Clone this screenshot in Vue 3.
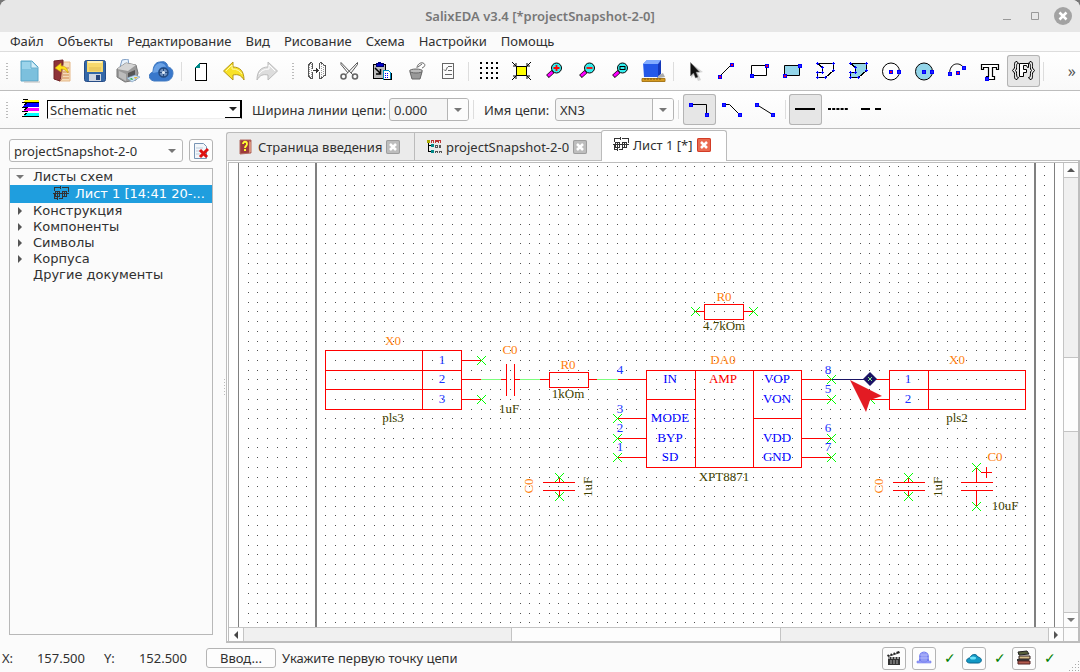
<script setup>
import { ref } from 'vue'

const menu = ['Файл', 'Объекты', 'Редактирование', 'Вид', 'Рисование', 'Схема', 'Настройки', 'Помощь']

const node = (x, y, c = '#22f') => `<rect x="${x - 1.5}" y="${y - 1.5}" width="4" height="4" fill="#00f"/><rect x="${x - 0.5}" y="${y - 0.5}" width="2" height="2" fill="${c}"/>`
const lens = (mark) => `<path d="M5.500 17.500L11 12.500" stroke="#000" stroke-width="4"/><path d="M6 17L10.500 13" stroke="#f0f" stroke-width="3"/><circle cx="14.500" cy="9" r="5" fill="#3ee" stroke="#000"/>${mark}`
const poly = (fill) => `<g shape-rendering="crispEdges"><path d="M4.500 4.500H20.500V11.500L12.500 18.500H4.500V13.500H9.500V8.500Z" fill="${fill}" stroke="#000"/><path d="M3 4.500h3M4.500 3v3M19 4.500h3M20.500 3v3M19 11.500h3M20.500 10v3M11 18.500h3M12.500 17v3M3 18.500h3M4.500 17v3M3 13.500h3M4.500 12v3M8 13.500h3M9.500 12v3M8 8.500h3M9.500 7v3" stroke="#00f"/></g>`

const icons = {
  doc: '<path d="M4 2h11l6 6v14H4Z" fill="#7cc0dd" stroke="#5aa6c8"/><path d="M5 3h9v7H5Z" fill="#9bd3ea"/><path d="M14 2v7h7" fill="#d5eef8" stroke="#6cb1cf"/><path d="M7 23h16" stroke="#bbb"/>',
  open: '<path d="M9 3h11v19H9Z" fill="#f5dcb8" stroke="#e5b888"/><path d="M13 9h6M13 13h6M13 16h6M13 19h6" stroke="#d08850"/><path d="M4 2l9-1v4l-3 17-6-2Z" fill="#8e3338" stroke="#6e2327"/><path d="M10 21l2-1V6" stroke="#c47a5a" fill="none"/><path d="M5 9l6-5v3c5 0 7 3 7 7-2-3-4-4-7-4v3Z" fill="#ffe21a" stroke="#c59a10" stroke-width=".6"/>',
  save: '<rect x="1.500" y="1.500" width="21" height="21" rx="2" fill="#3468a8" stroke="#264c86"/><path d="M4 2h16v11H4Z" fill="#f7d96c"/><path d="M5 2h14v2H5Z" fill="#fff3b8"/><path d="M6 9h12M6 11h12" stroke="#e0bc55"/><path d="M6 15h12v7H6Z" fill="#cfd6e2"/><path d="M13 16h4v5h-4Z" fill="#27457c"/>',
  print: '<path d="M4 8l2-7 6-1 1 6Z" fill="#e8f2fc" stroke="#7d9cc4"/><path d="M1 10l9-6 10 2 2 8-2 7-11 2-8-5Z" fill="#999" stroke="#777"/><path d="M1 10l9-6 10 2-8 6Z" fill="#d5d5d5"/><path d="M3 12l7 3v7l-7-4Z" fill="#bcbcbc"/><path d="M12 14l7-3v6l-7 3Z" fill="#555"/><path d="M11 19l8-3 5 2-8 5Z" fill="#cde4f4" stroke="#7799c0" stroke-width=".6"/><path d="M13 20l3-1 1 2" fill="#2cab36"/><path d="M18 18l4 0-3 2Z" fill="#e8b838"/>',
  cloud: '<path d="M5 22c-6-1-6-8-1-9 0-5 2-10 7-10 4-1 7 0 8 5 5 1 6 6 4 10-2 4-5 4-8 4Z" fill="#3978cb" stroke="#3f78c0"/><path d="M4 14c1-7 3-9 7-10 3 0 5 1 6 4-5-1-7 1-8 5Z" fill="#6ba2e5"/><circle cx="14.500" cy="13.500" r="4.500" fill="#6f91bf" stroke="#234a80" stroke-width="1.500"/><path d="M14.500 9v9M10 13.500h9" stroke="#234a80"/><circle cx="14.500" cy="13.500" r="1.500" fill="#e3effa"/>',
  blank: '<g shape-rendering="crispEdges"><path d="M6.500 8.500L10.500 4.500H17.500V21.500H6.500Z" fill="#fff" stroke="#000"/><path d="M7 8l3-3v3Z" fill="#088" stroke="#088"/></g>',
  undo: '<path d="M1.500 12L11 3v5c7 0 11 4 11 13-3-5-6-6-11-5v5Z" fill="#f8e227" stroke="#b59618"/><path d="M4 12l6-6v4c5 0 8 2 10 5" stroke="#fff9a5" fill="none"/>',
  redo: '<path d="M22.500 12L13 3v5C6 8 2 12 2 21c3-5 6-6 11-5v5Z" fill="#ddd" stroke="#bbb"/><path d="M20 12l-6-6v4c-5 0-8 2-10 5" stroke="#fff" fill="none"/>',
  mirror: '<g shape-rendering="crispEdges" fill="none" stroke="#555"><path d="M8.500 4v6M8.500 13v7M8 3.500h-1l-3 3v10l3 3h1M15.500 4v6M15.500 13v7M16 3.500h1l4 3v10l-4 3h-1"/><path d="M5.500 6v12M7.500 5v14M17.500 5v14M19.500 6v12" stroke="#999" stroke-dasharray="1 1"/><path d="M9 11.500h6M12.500 9v5M13.500 10v3" stroke="#333"/></g>',
  cut: '<path d="M4 3.500L16 16M20.500 3.500L8.500 16M4 3.500v2L11 14M20.500 3.500v2L14 14" fill="none" stroke="#555"/><circle cx="6.500" cy="17.500" r="2.500" fill="none" stroke="#666" stroke-width="1.600"/><circle cx="18" cy="17.500" r="2.500" fill="none" stroke="#666" stroke-width="1.600"/>',
  paste: '<g shape-rendering="crispEdges"><rect x="3.500" y="5.500" width="12" height="14" fill="#bbb" stroke="#000"/><path d="M6 4h7v3H6Z" fill="#00c" stroke="#006"/><path d="M8 3h3v2H8Z" fill="#008"/></g><path d="M5 9l5 5M10.500 10v5H6" stroke="#000" stroke-width="1.500" fill="none"/><g shape-rendering="crispEdges"><path d="M13.500 11.500h5l2 2v7h-7Z" fill="#fff" stroke="#08b"/><path d="M15 14.500h4M15 16.500h4M15 18.500h4" stroke="#00f" stroke-dasharray="1 1"/><path d="M13.500 20.500h8v-7" stroke="#000" fill="none"/></g>',
  pot: '<g fill="#999" stroke="#666"><path d="M7 13h12l-2 7h-8Z"/><ellipse cx="13" cy="12" rx="6.500" ry="2" fill="#bbb"/><path d="M14 9c0-3 3-6 6-5s2 4-1 5" fill="#fff"/><path d="M15 8l4-3" /></g>',
  list: '<g shape-rendering="crispEdges" fill="none" stroke="#666"><path d="M6.500 4.500h11v15h-11Z"/><path d="M12 7.500h4M12 11.500h4M9 15.500h7"/></g><path d="M8 10.500l1.500 1.500 2-4" fill="none" stroke="#666"/>',
  dots: '<path d="M4 5h2M10 5h2M15 5h2M20 5h2M4 10h2M10 10h2M15 10h2M20 10h2M4 15h2M10 15h2M15 15h2M20 15h2M4 20h2M10 20h2M15 20h2M20 20h2" stroke="#000" stroke-width="2" shape-rendering="crispEdges" transform="translate(0 -1)"/>',
  fit: '<g shape-rendering="crispEdges"><path d="M7.500 7.500h10v9h-10Z" fill="#ff0" stroke="#000"/></g><path d="M3 3l4 4M7 4v3H4M22 3l-4 4M18 4v3h3M3 21l4-4M7 20v-3H4M22 21l-4-4M18 20v-3h3" stroke="#000" fill="none"/>',
  zoomin: lens('<path d="M14.500 6v6M11.500 9h6" stroke="#f00" stroke-width="1.800"/>'),
  zoomout: lens('<path d="M11.500 9h6" stroke="#f00" stroke-width="1.800"/>'),
  zoomfit: lens('<rect x="12" y="7.500" width="5" height="3" fill="#3ee" stroke="#000"/>'),
  cube: '<path d="M2 5l4-4h14l-3 4v13H3Z" fill="#3a6bf0"/><path d="M2 5l4-4h14l-3 4Z" fill="#82acff"/><path d="M17 5l3-4v14l-4 4Z" fill="#1437b8"/><path d="M3 5h14v13H3Z" fill="#2458e8"/><path d="M17 17l5-3 2 4-7 1Z" fill="#aaa"/><path d="M1 19.500h23v3H1Z" fill="#d59a20" stroke="#a8791c"/><path d="M4 19v2M7 19v2M10 19v2M13 19v2M16 19v2M19 19v2" stroke="#7a5713"/>',
  pointer: '<path d="M10 4v15l4-4 3 7 3-1-3-7 5-1Z" fill="#bbb" opacity=".6"/><path d="M9.500 3.500V17l3-3 2 5 2.500-1-2-5h3.500Z" fill="#111" stroke="#777" stroke-width=".5"/>',
  line: '<path d="M5.500 17.500L17.500 5.500" stroke="#000"/>' + node(5.5, 17.5, '#d04') + node(17.5, 5.5, '#d04'),
  rect: '<path d="M4.500 6.500h15v10h-15Z" fill="#fff" stroke="#000"/>' + node(4.5, 16.5) + node(19.5, 6.5, '#d04'),
  rectfill: '<path d="M4.500 6.500h15v10h-15Z" fill="#93d5e9" stroke="#000"/>' + node(4.5, 16.5, '#d04') + node(19.5, 6.5),
  poly: poly('none'),
  polyfill: poly('#93d5e9'),
  circle: '<circle cx="12" cy="12.500" r="8.500" fill="#fff" stroke="#000"/>' + node(11.5, 12.5, '#d04') + node(19.5, 12.5),
  circlefill: '<circle cx="12" cy="12.500" r="8.500" fill="#93d5e9" stroke="#000"/>' + node(11.5, 12.5) + node(19.5, 12.5),
  arc: '<path d="M4.500 14.500C5 3 15 3 18.500 8.500" fill="none" stroke="#000"/>' + node(4.5, 14.5) + node(12.5, 13.5, '#d04') + node(18.5, 8.5),
  text: '<path d="M3.500 5.500h17v5h-2v-2h-4v9h2v3H8.500v-3h2v-9h-5v2h-2Z" fill="#fff" stroke="#000" stroke-width="1.200"/>' + node(8.5, 19.5),
  frame: '<g fill="none" stroke="#000"><path d="M6 2.500C3 2.500 3.500 5 3.500 9L1.500 11.500L3.500 14C3.500 18 3 20.500 6 20.500M7.500 4.500H6.500C5.500 5 5.500 6 5.500 10L4.500 11.500L5.500 13C5.500 18 6 18.500 7.500 18.500M6 2.500l1.500 2M6 20.500l1.500-2"/><path d="M19 2.500C22 2.500 21.500 5 21.500 9L23.500 11.500L21.500 14C21.500 18 22 20.500 19 20.500M17.500 4.500H18.500C19.500 5 19.500 6 19.500 10L20.500 11.500L19.500 13C19.500 18 19 18.500 17.500 18.500M19 2.500l-1.500 2M19 20.500l-1.500-2"/><path d="M8.500 4.500h9v4h-1l-1-2h-3v4h3v3h-3v4h-4Z" fill="#fff"/></g>',
  ortho: '<path d="M3.500 6.500H19.500V16.500" fill="none" stroke="#000"/>' + node(3.5, 6.5) + node(19.5, 16.5),
  bend: '<path d="M3.500 6.500H9.500L19.500 16.500" fill="none" stroke="#000"/>' + node(3.5, 6.5) + node(19.5, 16.5),
  straight: '<path d="M3.500 6.500L19.500 16.500" fill="none" stroke="#000"/>' + node(3.5, 6.5) + node(19.5, 16.5),
  solid: '<path d="M2 11h20" stroke="#000" stroke-width="2"/>',
  dotted: '<path d="M2 11h20" stroke="#000" stroke-width="2" stroke-dasharray="3 1.200"/>',
  dashed: '<path d="M2 11h9M16 11h6" stroke="#000" stroke-width="2"/>'
}

const fileTools = [['doc', 'open', 'save', 'print', 'cloud'], ['blank', 'undo', 'redo']]
const editTools = [
  ['mirror', 'cut', 'paste', 'pot', 'list'],
  ['dots', 'fit', 'zoomin', 'zoomout', 'zoomfit', 'cube'],
  ['pointer', 'line', 'rect', 'rectfill', 'poly', 'polyfill', 'circle', 'circlefill', 'arc', 'text', 'frame']
]
const drawMode = ref('frame')
const bendMode = ref('ortho')
const lineMode = ref('solid')
const width = ref('0.000')
const netName = ref('XN3')

const treeItems = ['Конструкция', 'Компоненты', 'Символы', 'Корпуса']

const tabs = [
  { title: 'Страница введения', icon: 'help', kind: 'intro' },
  { title: 'projectSnapshot-2-0', icon: 'tree', kind: 'overview' },
  { title: 'Лист 1 [*]', icon: 'sheet', kind: 'sheet' }
]
const activeTab = ref(2)

const smallIcons = {
  help: '<path d="M2 1l11 0v13l-11 1Z" fill="#9c3b3c" stroke="#b06a60"/><path d="M11 2v12l2-1V3Z" fill="#d99079"/><path d="M5 5c0-3 4-3 4 0 0 2-2 2-2 4" fill="none" stroke="#ff3" stroke-width="1.800"/><path d="M6 10h2v2H6Z" fill="#ff3"/>',
  tree: '<g shape-rendering="crispEdges"><path d="M2.500 2v11M3 6.500h3M3 12.500h3" stroke="#000" fill="none"/><path d="M1 1h3v3H1Z" fill="#aa0"/><path d="M5 5h3v3H5ZM5 11h3v3H5Z" fill="#088"/><path d="M5.500 4V1.500h2V4M9.500 4V1.500h2v1h-2M12.500 4V1.500h2V4" stroke="#b33" fill="none"/><path d="M9.500 6.500h2v2h-2Z M13 6l2 3M15 6l-2 3M9.500 14v-2h2v2M13.500 14v-2h2v2" stroke="#555" fill="none"/></g>',
  sheet: '<g shape-rendering="crispEdges" fill="none" stroke="#333"><path d="M1.500 5V1.500h6M9 1.500h6V6M7.500 0v3M0 7.500h16M2.500 5.500h4v5h-4ZM9.500 5.500h4v5h-4ZM1.500 8v4.500h3M6 12.500h3V8M4.500 11v3M4.500 6v4M11.500 6v4"/></g>'
}

const stops = (start, count) => Array.from({ length: count }, (_, i) => Math.floor(start + i * 9.715))
const gridPath = stops(166.2, 48).map((y) => stops(248, 83).map((x) => `M${x} ${y}.5h1`).join('')).join('')

const red = [
  'M325.5 350.5H461.5V409.5H325.5ZM422.5 350V409M325 370.5H461M325 389.5H461M461 360.5H481M461 379.5H481M461 399.5H481',
  'M501 379.5H506M506.5 364V396M514.5 364V396M514 379.5H520',
  'M549.5 372.5H588.5V387.5H549.5ZM540 379.5H549M589 379.5H597',
  'M543 482.5H575M543 490.5H575M559.5 478V482M559.5 491V496',
  'M704.5 304.5H743.5V319.5H704.5ZM695 311.5H704M744 311.5H754',
  'M646.5 370.5H801.5V467.5H646.5ZM695.5 370V467M753.5 370V467M646 399.5H695M753 418.5H801',
  'M618 379.5H646M618 418.5H646M618 438.5H646M618 457.5H646M802 379.5H832M802 399.5H832M802 438.5H832M802 457.5H832',
  'M889.5 370.5H1025.5V409.5H889.5ZM928.5 370V409M889 389.5H1025M870 379.5H889M870 399.5H889',
  'M893 482.5H925M893 490.5H925M908.5 478V482M908.5 491V496',
  'M961 482.5H993M961 490.5H993M976.5 467V482M976.5 491V506M981 472.5H992M986.5 467V478'
].join('')

const ends = [
  [481.5, 360.5], [481.5, 399.5], [559.5, 477.5], [559.5, 496.5], [695.5, 311.5], [753.5, 311.5],
  [617.5, 418.5], [617.5, 438.5], [617.5, 457.5], [831.5, 379.5], [831.5, 399.5], [831.5, 438.5],
  [831.5, 457.5], [870.5, 399.5], [908.5, 477.5], [908.5, 496.5], [976.5, 467.5], [976.5, 506.5]
]
const crosses = ends.map(([x, y]) => `M${x - 4.5} ${y - 4.5}l9 9m0 -9l-9 9`).join('')

const labels = [
  [393, 345, 'X0', 'ref'], [393, 422, 'pls3', 'val'], [442, 364, '1', 'pin'], [442, 383, '2', 'pin'], [442, 403, '3', 'pin'],
  [510, 354, 'C0', 'ref'], [509, 413, '1uF', 'val'], [568, 369, 'R0', 'ref'], [568, 398, '1kOm', 'val'],
  [724, 301, 'R0', 'ref'], [724, 330, '4.7kOm', 'val'], [723, 364, 'DA0', 'ref'], [723, 383, 'AMP', 'part'],
  [670, 383, 'IN', 'name'], [670, 422, 'MODE', 'name'], [670, 442, 'BYP', 'name'], [670, 461, 'SD', 'name'],
  [777, 383, 'VOP', 'name'], [777, 403, 'VON', 'name'], [777, 442, 'VDD', 'name'], [777, 461, 'GND', 'name'],
  [724, 481, 'XPT8871', 'val'], [620, 374, '4', 'pin'], [620, 413, '3', 'pin'], [620, 432, '2', 'pin'], [620, 451, '1', 'pin'],
  [828, 374, '8', 'pin'], [828, 393, '5', 'pin'], [828, 432, '6', 'pin'], [828, 451, '7', 'pin'],
  [957, 364, 'X0', 'ref'], [908, 383, '1', 'pin'], [908, 403, '2', 'pin'], [957, 422, 'pls2', 'val'],
  [995, 461, 'C0', 'ref'], [1005, 510, '10uF', 'val']
]
const turned = [[533, 486, 'C0', 'ref'], [592, 487, '1uF', 'val'], [883, 486, 'C0', 'ref'], [942, 487, '1uF', 'val']]
</script>

<template>
  <div class="window">
    <header class="titlebar">
      <h1>SalixEDA v3.4 [*projectSnapshot-2-0]</h1>
      <div class="controls">
        <button aria-label="Свернуть"><svg width="10" height="12"><path d="M1 9.500h8" stroke="#999" /></svg></button>
        <button aria-label="Развернуть"><svg width="10" height="10"><path d="M1.500 1.500h7v7h-7Z" fill="none" stroke="#999" /></svg></button>
        <button aria-label="Закрыть"><svg width="18" height="18"><circle cx="9" cy="9" r="9" fill="#a3a3a3" /><path d="M5.500 5.500l7 7m0-7l-7 7" stroke="#fff" stroke-width="2.500" /></svg></button>
      </div>
    </header>

    <nav class="menubar">
      <button v-for="m in menu" :key="m">{{ m }}</button>
    </nav>

    <div class="toolbar main-tools" role="toolbar">
      <i class="grip first"></i>
      <template v-for="(g, gi) in fileTools" :key="'f' + gi">
        <i v-if="gi" class="sep"></i>
        <button v-for="n in g" :key="n" class="tool" :aria-label="n"><svg width="25" height="24" v-html="icons[n]"></svg></button>
      </template>
      <i class="grip"></i>
      <template v-for="(g, gi) in editTools" :key="'e' + gi">
        <i v-if="gi" class="sep"></i>
        <button v-for="n in g" :key="n" class="tool" :class="{ on: drawMode === n }" :aria-label="n" @click="drawMode = n"><svg width="25" height="24" v-html="icons[n]"></svg></button>
      </template>
      <i class="sep"></i>
      <button class="more" aria-label="Ещё">»</button>
    </div>

    <div class="toolbar net-tools" role="toolbar">
      <i class="grip first"></i>
      <svg class="layers" width="18" height="18" shape-rendering="crispEdges">
        <path d="M3 1h14v2H1Z" fill="#ff0" /><path d="M4 4h13v4H1Z" fill="#00f" /><path d="M4 9h13v3H1Z" fill="#f0f" /><path d="M4 14h13v3H1Z" fill="#0ff" />
        <path d="M0 3.500h17M0 8.500h6M0 12.500h6M0 17.500h17M1 .500h5M2 6l3-2M2 11l3-2M2 16l3-2" stroke="#000" fill="none" />
      </svg>
      <div class="classic">
        <select aria-label="Слой"><option>Schematic net</option></select>
        <span class="classic-arrow"><i class="down dark"></i></span>
      </div>
      <label class="lb-width" for="w">Ширина линии цепи:</label>
      <div class="combo small"><input id="w" v-model="width" /><button aria-label="Список"><i class="down"></i></button></div>
      <i class="sep wide"></i>
      <label class="lb-name" for="n">Имя цепи:</label>
      <div class="combo large"><input id="n" v-model="netName" /><button aria-label="Список"><i class="down"></i></button></div>
      <i class="sep wide"></i>
      <button v-for="n in ['ortho', 'bend', 'straight']" :key="n" class="tool" :class="{ on: bendMode === n }" :aria-label="n" @click="bendMode = n"><svg width="25" height="24" v-html="icons[n]"></svg></button>
      <i class="sep"></i>
      <button v-for="n in ['solid', 'dotted', 'dashed']" :key="n" class="tool" :class="{ on: lineMode === n }" :aria-label="n" @click="lineMode = n"><svg width="25" height="24" v-html="icons[n]"></svg></button>
    </div>

    <main class="body">
      <aside class="side">
        <div class="project-row">
          <div class="project">
            <select aria-label="Проект"><option>projectSnapshot-2-0</option></select>
            <i class="down"></i>
          </div>
          <button class="square" aria-label="Закрыть проект">
            <svg width="16" height="16"><path d="M1.500 .500h9l3 3v12h-12Z" fill="#f2f6fa" stroke="#7894b4" /><path d="M3 5h7M3 8h5M3 11h4" stroke="#bcd" /><path d="M7 7l7 7m1-8l-8 8" stroke="#d11" stroke-width="3" /></svg>
          </button>
        </div>
        <ul class="tree">
          <li><i class="down"></i>Листы схем</li>
          <li class="selected"><svg width="16" height="16" v-html="smallIcons.sheet"></svg><span>Лист 1 [14:41 20-...</span></li>
          <li v-for="t in treeItems" :key="t"><i class="right"></i>{{ t }}</li>
          <li>Другие документы</li>
        </ul>
      </aside>
      <div class="splitter"><i></i></div>

      <section class="work">
        <div class="tabs" role="tablist">
          <div v-for="(t, i) in tabs" :key="t.title" class="tab" :class="[t.kind, { active: activeTab === i }]" role="tab" @click="activeTab = i">
            <svg width="16" height="16" v-html="smallIcons[t.icon]"></svg>
            <span>{{ t.title }}</span>
            <button aria-label="Закрыть вкладку"><svg width="14" height="14"><path d="M4 4l6 6m0-6l-6 6" stroke="#fff" stroke-width="2.500" /></svg></button>
          </div>
        </div>
        <div class="pane">
          <svg class="canvas">
            <g transform="translate(-229 -163)">
              <g shape-rendering="crispEdges" fill="none">
                <path :d="gridPath" stroke="#505050" />
                <path d="M238.500 160V640M1054.500 160V640" stroke="#808080" />
                <path d="M316 160V640M1035 160V640" stroke="#808080" stroke-width="2" />
                <path d="M481 379.500H501M520 379.500H540M597 379.500H618" stroke="#7dff7d" />
                <path :d="red" stroke="#f00" />
                <path d="M832 379.500H866" stroke="#1b1464" />
              </g>
              <path :d="crosses" stroke="#0f0" fill="none" />
              <path d="M870 372l7 7-7 7-7-7Z" fill="#1b1464" />
              <path d="M868 377l4 4m0-4l-4 4" stroke="#8df08d" />
              <text v-for="(l, i) in labels" :key="i" :x="l[0]" :y="l[1]" :class="l[3]">{{ l[2] }}</text>
              <text v-for="(l, i) in turned" :key="'t' + i" :transform="`translate(${l[0]} ${l[1]}) rotate(-90)`" :class="l[3]">{{ l[2] }}</text>
              <path d="M850 380l32 16-12 4-4 12Z" fill="#e31b23" />
            </g>
          </svg>
          <div class="vbar"><b><i class="up"></i></b><span class="track"></span><span class="thumb"></span><span class="track rest"></span><b><i class="down"></i></b></div>
          <div class="hbar"><b><i class="left"></i></b><span class="track"></span><span class="thumb"></span><span class="track rest"></span><b><i class="right"></i></b></div>
          <div class="corner"></div>
        </div>
      </section>
    </main>

    <footer class="status">
      <span class="axis">X:</span><span class="num">157.500</span>
      <span class="axis">Y:</span><span class="num">152.500</span>
      <button class="enter">Ввод...</button>
      <span class="hint">Укажите первую точку цепи</span>
      <button class="square" aria-label="Видео"><svg width="16" height="16"><path d="M2 7h12v8H2Z" fill="#333" /><path d="M1 5l12-4 1 2-12 4Z" fill="#222" /><path d="M3 4l2 2M6 3l2 2M9 2l2 2M2 8h12" stroke="#fff" stroke-width="1.200" stroke-dasharray="2 1" /><path d="M4 11h8M4 13h8" stroke="#aaa" stroke-dasharray="2 1" /></svg></button>
      <button class="square" aria-label="Сеть"><svg width="16" height="16"><path d="M3 12V7a5 5.500 0 0 1 10 0v5Z" fill="#7680ef" /><path d="M4 5h8M3 8h10M6 3v9M8 2v10M10 3v9" stroke="#c6caff" stroke-width=".7" /><path d="M1 11h4l1 1h4l1-1h4v2H1Z" fill="#9ba3fa" stroke="#6872e8" stroke-width=".5" /></svg></button>
      <span class="ok">✓</span>
      <button class="square" aria-label="Облако"><svg width="16" height="16"><path d="M4 13C-1 13 0 8 4 8c1-4 6-5 8-1 5 1 4 6 0 6Z" fill="#1198c4" stroke="#08658e" /><ellipse cx="7" cy="8" rx="3" ry="1.500" fill="#6fe3fa" /></svg></button>
      <span class="ok">✓</span>
      <button class="square" aria-label="Библиотека"><svg width="16" height="16"><path d="M2 2l9-1 2 3-10 1Z" fill="#57603a" stroke="#222" /><path d="M3 6h11v3H3Z" fill="#d8c088" stroke="#322" /><path d="M1 9h12v2H1Z" fill="#333" /><path d="M2 11h12v3H2Z" fill="#b35b4e" stroke="#522" /></svg></button>
      <span class="ok">✓</span>
      <svg class="resize" width="12" height="12"><path d="M10 1.500h1M7 4.500h4M4 7.500h7M1 10.500h10" stroke="#aaa" stroke-dasharray="1 2" /></svg>
    </footer>
  </div>
</template>

<style>
body { margin: 0; background: #777; overflow: hidden; }
</style>

<style scoped>
.window { min-height: 100vh; display: flex; flex-direction: column; background: #fbfbfb; color: #303030; font: 13px/16px "Noto Sans", "Open Sans", sans-serif; border-radius: 8px 8px 0 0; overflow: hidden; }
* { box-sizing: border-box; }
button, input, select { font: inherit; color: inherit; margin: 0; padding: 0; border: 0; background: none; outline: 0; appearance: none; }
button svg, .layers { display: block; }
.titlebar { display: grid; grid-template-columns: 1fr auto 1fr; align-items: center; height: 32px; background: #e7e7e7; }
h1 { grid-column: 2; margin: 0; font-size: 13px; font-weight: 600; color: #777; }
.controls { display: flex; justify-content: flex-end; align-items: center; gap: 18px; padding-right: 8px; }
.controls button:last-child { margin-left: -4px; }
.menubar { display: flex; height: 20px; padding-left: 3px; border-bottom: 1px solid #ddd; }
.menubar button { padding: 0 7px 2px; }
.toolbar { display: flex; align-items: center; background: linear-gradient(#fff, #f9f9f9); border-bottom: 1px solid #bdbdbd; }
.main-tools { height: 39px; }
.net-tools { height: 38px; }
.grip { flex: none; width: 16px; height: 16px; background: conic-gradient(from 90deg at 1px 1px, transparent 270deg, #bbb 0) 0 0 / 3px 3px; background-clip: content-box; background-origin: content-box; padding: 0 5px 0 7px; }
.grip.first { width: 13px; padding: 0 4px 0 5px; }
.sep { flex: none; width: 7px; height: 19px; border: solid transparent; border-width: 0 3px; background: #ddd; background-clip: padding-box; }
.sep.wide { width: 9px; border-width: 0 4px; }
.tool { flex: none; width: 33px; height: 32px; padding: 4px; }
.net-tools .tool { height: 31px; }
.tool.on { background: #e6e6e6; box-shadow: inset 0 0 0 1px #b4b4b4; border-radius: 3px; }
.more { margin-left: auto; padding-right: 4px; font-size: 16px; color: #555; }
.layers { flex: none; margin: 0 7px 4px 9px; }
.classic { display: flex; width: 195px; height: 19px; border: 1px solid #000; border-bottom-color: #eee; background: #fff; }
.classic select { flex: 1; padding-left: 2px; line-height: 16px; }
.classic-arrow { display: flex; align-items: center; justify-content: center; width: 16px; border: solid #000; border-width: 0 1px 1px 0; }
label { flex: none; white-space: nowrap; padding-left: 10px; }
.lb-width { width: 147px; }
.lb-name { width: 77px; padding-left: 6px; }
.combo { display: flex; height: 23px; border: 1px solid #b4b4b4; border-radius: 3px; background: #f5f5f5; overflow: hidden; }
.combo input { flex: 1; min-width: 0; padding-left: 4px; }
.combo button { width: 21px; border-left: 1px solid #b4b4b4; background: #fcfcfc; display: flex; align-items: center; justify-content: center; }
.small { width: 80px; }
.large { width: 119px; }
.down, .up, .left, .right { display: block; flex: none; width: 0; height: 0; border: 4px solid transparent; }
.down { border-top-color: #777; border-bottom: 0; }
.down.dark { border-top-color: #222; }
.up { border-bottom-color: #555; border-top: 0; }
.left { border-right-color: #444; border-left: 0; }
.right { border-left-color: #555; border-right: 0; }
.body { flex: 1; display: flex; min-height: 0; }
.side { display: flex; flex-direction: column; width: 213px; padding: 10px 0 9px 9px; }
.project-row { display: flex; gap: 6px; margin-bottom: 6px; }
.project { display: flex; align-items: center; flex: 1; height: 23px; padding-right: 6px; border: 1px solid #b8b8b8; border-radius: 3px; background: #fdfdfd; }
.project select { flex: 1; padding-left: 4px; line-height: 20px; }
.square { flex: none; display: flex; align-items: center; justify-content: center; width: 24px; height: 23px; border: 1px solid #b4b4b4; border-radius: 3px; background: #fdfdfd; }
.tree { flex: 1; margin: 0; padding: 0; list-style: none; border: 1px solid #b8b8b8; font-family: "DejaVu Sans", sans-serif; }
.tree li { position: relative; display: flex; align-items: center; height: 16px; padding-left: 23px; white-space: nowrap; }
.tree li .down { position: absolute; left: 6px; }
.tree li .right { position: absolute; left: 8px; }
.tree li.selected { height: 18px; padding-left: 43px; gap: 6px; background: #1f9ede; color: #fff; }
.selected svg { flex: none; }
.splitter { flex: none; width: 13px; display: flex; align-items: center; justify-content: flex-end; }
.splitter i { width: 1px; height: 16px; margin-right: 1px; background: repeating-linear-gradient(#bbb 0 1px, transparent 1px 3px); }
.work { flex: 1; display: flex; flex-direction: column; min-width: 0; padding: 1px 0 1px; }
.tabs { display: flex; align-items: flex-end; height: 30px; }
.tab { flex: none; display: flex; align-items: center; height: 28px; border: 1px solid #bbb; border-bottom: 0; border-right: 0; background: #ebebeb; padding-left: 11px; gap: 4px; white-space: nowrap; border-radius: 3px 0 0 0; }
.tab svg { flex: none; display: block; }
.intro { width: 188px; }
.overview { width: 187px; border-radius: 0; }
.tab.sheet { width: 126px; height: 31px; margin-bottom: -1px; padding-bottom: 2px; border-right: 1px solid #bbb; border-radius: 3px 3px 0 0; }
.tab.active { background: #fff; position: relative; }
.tab button { width: 14px; height: 14px; border-radius: 2px; background: #bdbdbd; box-shadow: inset 0 0 0 1px #9d9d9d; }
.tab.active button { background: #ea6a50; box-shadow: inset 0 0 0 1px #d23c26; }
.pane { flex: 1; min-height: 0; display: grid; grid-template: 1fr 14px / 1fr 15px; border: 2px solid #bdbdbd; border-width: 1px 2px 2px 1px; padding: 2px 0 0 2px; background: linear-gradient(#bdbdbd, #bdbdbd) 1px 1px / 100% 1px no-repeat, linear-gradient(#bdbdbd, #bdbdbd) 1px 1px / 1px 100% no-repeat, #fff; }
.canvas { display: block; width: 100%; height: 100%; min-height: 0; background: #fff; overflow: hidden; }
.canvas text { font: 13px "Liberation Serif", serif; text-anchor: middle; }
.ref { fill: #ff7f0e; }
.val { fill: #3f3f00; }
.pin, .name { fill: #00f; }
.pin { fill: #1a34ff; }
.part { fill: #f00; }
.vbar, .hbar { display: flex; background: #fdfdfd; border: 0 solid #c4c4c4; }
.vbar { flex-direction: column; border-left-width: 1px; }
.hbar { border-top-width: 1px; }
.vbar b, .hbar b { flex: none; display: flex; align-items: center; justify-content: center; width: 14px; height: 14px; }
.track { background: #f0f0f0; border: 0 solid #c4c4c4; }
.vbar .track { flex: 181; border-width: 1px 0; }
.vbar .thumb { flex: 73; }
.vbar .rest { flex: 182; }
.hbar .track { flex: 268; border-width: 0 1px; }
.hbar .thumb { flex: 268; }
.hbar .rest { flex: 268; }
.corner { border: solid #c4c4c4; border-width: 1px 0 0 1px; background: #fbfbfb; }
.status { display: flex; align-items: center; height: 28px; padding: 0 0 0 2px; }
.axis { width: 18px; }
.num { width: 65px; text-align: right; margin-right: 19px; }
.enter { width: 70px; height: 20px; border: 1px solid #b4b4b4; border-radius: 3px; background: #fdfdfd; }
.hint { flex: 1; padding-left: 6px; }
.status .square { margin-right: 6px; }
.ok { width: 20px; padding-left: 2px; color: #008000; font: 14px "DejaVu Sans", sans-serif; }
.resize { align-self: flex-end; margin-left: 6px; }
</style>
